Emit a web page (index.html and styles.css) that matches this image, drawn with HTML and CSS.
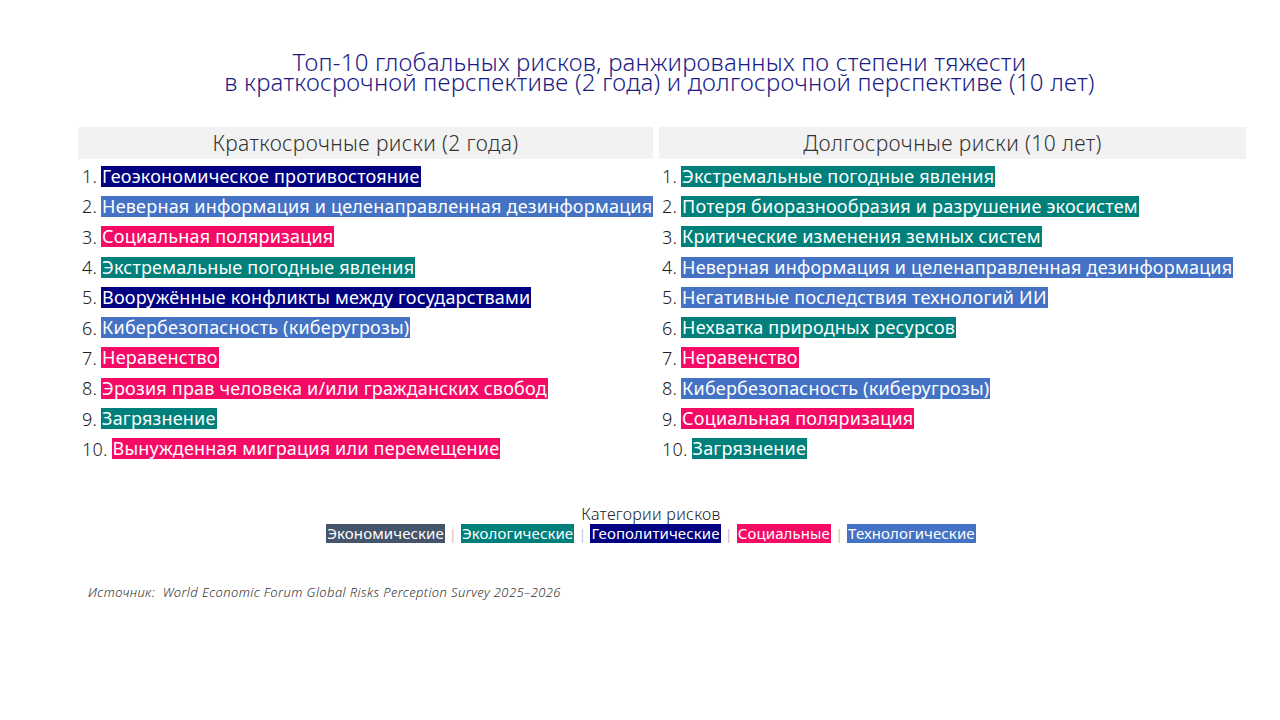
FILE: index.html
```html
<!DOCTYPE html>
<html lang="ru">
<head>
<meta charset="utf-8">
<link rel="stylesheet" href="styles.css">
</head>
<body>
<div class="page">
  <h1 class="title">Топ-10 глобальных рисков, ранжированных по степени тяжести<br>в краткосрочной перспективе (2 года) и долгосрочной перспективе (10 лет)</h1>
  <div class="table">
    <div class="col col-left">
      <div class="head">Краткосрочные риски (2 года)</div>
      <ol class="list">
        <li><span class="num">1.</span> <span class="tag geo">Геоэкономическое противостояние</span></li>
        <li><span class="num">2.</span> <span class="tag tech">Неверная информация и целенаправленная дезинформация</span></li>
        <li><span class="num">3.</span> <span class="tag soc">Социальная поляризация</span></li>
        <li><span class="num">4.</span> <span class="tag eco">Экстремальные погодные явления</span></li>
        <li><span class="num">5.</span> <span class="tag geo">Вооружённые конфликты между государствами</span></li>
        <li><span class="num">6.</span> <span class="tag tech">Кибербезопасность (киберугрозы)</span></li>
        <li><span class="num">7.</span> <span class="tag soc">Неравенство</span></li>
        <li><span class="num">8.</span> <span class="tag soc">Эрозия прав человека и/или гражданских свобод</span></li>
        <li><span class="num">9.</span> <span class="tag eco">Загрязнение</span></li>
        <li><span class="num">10.</span> <span class="tag soc">Вынужденная миграция или перемещение</span></li>
      </ol>
    </div>
    <div class="col col-right">
      <div class="head">Долгосрочные риски (10 лет)</div>
      <ol class="list">
        <li><span class="num">1.</span> <span class="tag eco">Экстремальные погодные явления</span></li>
        <li><span class="num">2.</span> <span class="tag eco">Потеря биоразнообразия и разрушение экосистем</span></li>
        <li><span class="num">3.</span> <span class="tag eco">Критические изменения земных систем</span></li>
        <li><span class="num">4.</span> <span class="tag tech">Неверная информация и целенаправленная дезинформация</span></li>
        <li><span class="num">5.</span> <span class="tag tech">Негативные последствия технологий ИИ</span></li>
        <li><span class="num">6.</span> <span class="tag eco">Нехватка природных ресурсов</span></li>
        <li><span class="num">7.</span> <span class="tag soc">Неравенство</span></li>
        <li><span class="num">8.</span> <span class="tag tech">Кибербезопасность (киберугрозы)</span></li>
        <li><span class="num">9.</span> <span class="tag soc">Социальная поляризация</span></li>
        <li><span class="num">10.</span> <span class="tag eco">Загрязнение</span></li>
      </ol>
    </div>
  </div>
  <div class="legend">
    <div class="legend-title">Категории рисков</div>
    <div class="legend-row">
      <span class="ltag econ">Экономические</span><span class="sep">|</span><span class="ltag eco">Экологические</span><span class="sep">|</span><span class="ltag geo">Геополитические</span><span class="sep">|</span><span class="ltag soc">Социальные</span><span class="sep">|</span><span class="ltag tech">Технологические</span>
    </div>
  </div>
  <div class="source">Источник:&nbsp; World Economic Forum Global Risks Perception Survey 2025–2026</div>
</div>
</body>
</html>
```

FILE: styles.css
```css
html, body {
  margin: 0;
  padding: 0;
  background: #ffffff;
}

.page {
  width: 1280px;
  height: 720px;
  font-family: "Noto Sans", "Liberation Sans", sans-serif;
  color: #222222;
  overflow: hidden;
}

.title {
  margin: 0;
  padding: 52px 0 0 39px;
  font-size: 24px;
  font-weight: 300;
  line-height: 20px;
  text-align: center;
  color: #1c1c86;
  letter-spacing: 0.2px;
}

.table {
  display: grid;
  grid-template-columns: 575px 587px;
  column-gap: 6px;
  margin: 35px 0 0 78px;
}

.head {
  height: 32px;
  line-height: 33px;
  background: #f2f2f2;
  text-align: center;
  font-size: 21px;
  font-weight: 300;
  letter-spacing: 0.4px;
  color: #333333;
}

.list {
  list-style: none;
  margin: 0;
  padding: 2px 0 0 0;
}

.list li {
  height: 30.3px;
  display: flex;
  align-items: center;
  gap: 4px;
  font-size: 18px;
  letter-spacing: 0.2px;
  white-space: nowrap;
}

.col-left .list li {
  padding-left: 4px;
}

.col-right .list li {
  padding-left: 3px;
}

.num {
  color: #222222;
  font-weight: 300;
}

.tag {
  display: inline-block;
  line-height: 21px;
  padding: 0 1px;
  color: #ffffff;
}

.geo { background: #000080; color: #ffffff; }
.tech { background: #4472c4; color: #ffffff; }
.soc { background: #f50a66; color: #ffffff; }
.eco { background: #00807a; color: #ffffff; }
.econ { background: #44546a; color: #ffffff; }

.legend {
  margin-top: 41px;
  padding-left: 22px;
  text-align: center;
}

.legend-title {
  font-size: 16px;
  font-weight: 300;
  letter-spacing: 0.3px;
  line-height: 18px;
  color: #222222;
}

.legend-row {
  display: flex;
  justify-content: center;
  align-items: center;
  gap: 4px;
  margin-top: 1px;
}

.ltag {
  display: inline-block;
  font-size: 15px;
  letter-spacing: 0.1px;
  line-height: 19px;
  padding: 0 1px;
}

.sep {
  color: #aaaaaa;
  font-size: 15px;
  font-weight: 300;
}

.source {
  margin: 39px 0 0 88px;
  font-size: 13px;
  letter-spacing: 0.4px;
  font-style: italic;
  font-weight: 300;
  color: #333333;
}
```
